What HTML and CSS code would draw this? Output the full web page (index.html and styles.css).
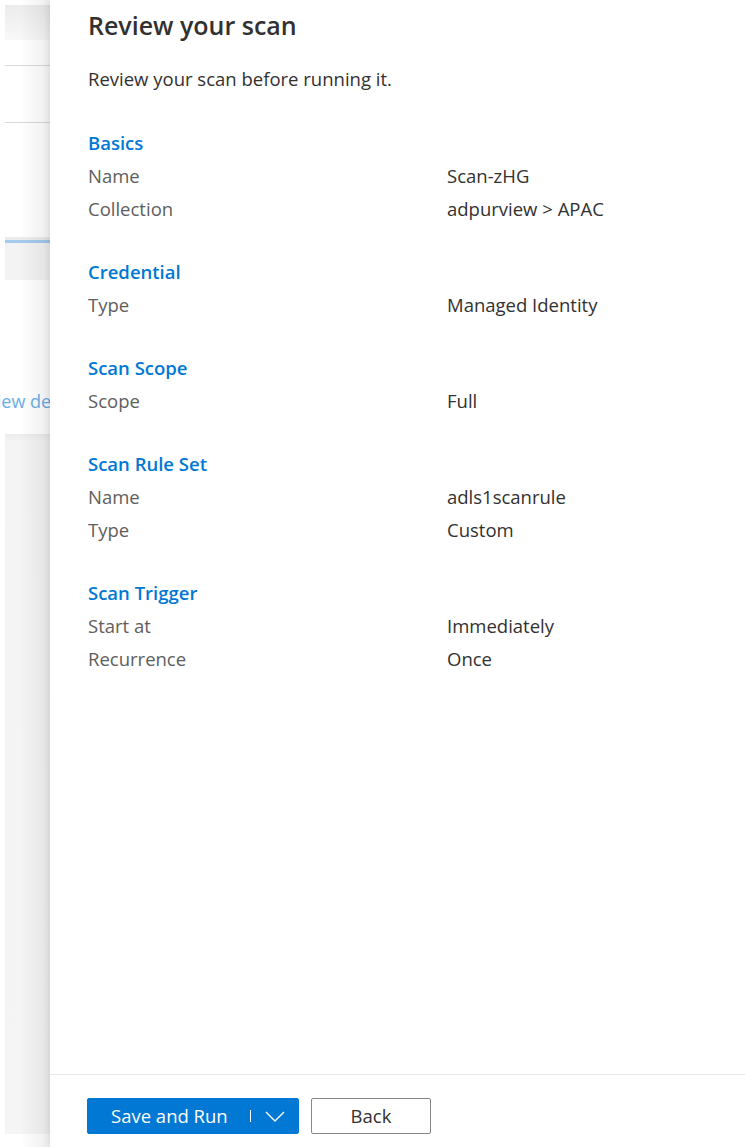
FILE: index.html
```html
<!DOCTYPE html>
<html lang="en">
<head>
<meta charset="utf-8">
<title>Review your scan</title>
<link rel="stylesheet" href="styles.css">
</head>
<body>
<div class="page">
  <aside class="backdrop">
    <div class="bd-top"></div>
    <div class="bd-row"></div>
    <div class="bd-row bd-row2"></div>
    <div class="bd-tab"><div class="bd-blue"></div></div>
    <div class="bd-link">View details</div>
    <div class="bd-card"></div>
  </aside>
  <main class="panel">
    <div class="content">
      <h1 class="title">Review your scan</h1>
      <p class="subtitle">Review your scan before running it.</p>

      <section class="section">
        <h2 class="sec-title">Basics</h2>
        <div class="row"><span class="label">Name</span><span class="value">Scan-zHG</span></div>
        <div class="row"><span class="label">Collection</span><span class="value">adpurview &gt; APAC</span></div>
      </section>

      <section class="section">
        <h2 class="sec-title">Credential</h2>
        <div class="row"><span class="label">Type</span><span class="value">Managed Identity</span></div>
      </section>

      <section class="section">
        <h2 class="sec-title">Scan Scope</h2>
        <div class="row"><span class="label">Scope</span><span class="value">Full</span></div>
      </section>

      <section class="section">
        <h2 class="sec-title">Scan Rule Set</h2>
        <div class="row"><span class="label">Name</span><span class="value">adls1scanrule</span></div>
        <div class="row"><span class="label">Type</span><span class="value">Custom</span></div>
      </section>

      <section class="section">
        <h2 class="sec-title">Scan Trigger</h2>
        <div class="row"><span class="label">Start at</span><span class="value">Immediately</span></div>
        <div class="row"><span class="label">Recurrence</span><span class="value">Once</span></div>
      </section>
    </div>
    <footer class="footer">
      <button class="btn btn-primary" type="button">
        <span class="btn-text">Save and Run</span>
        <span class="btn-sep"></span>
        <svg class="chev" width="20" height="11" viewBox="0 0 20 11" aria-hidden="true"><path d="M1 1 L10 10 L19 1" fill="none" stroke="#fff" stroke-width="1.4"/></svg>
      </button>
      <button class="btn btn-default" type="button">Back</button>
    </footer>
  </main>
</div>
</body>
</html>
```

FILE: styles.css
```css
* { box-sizing: border-box; }
html, body { margin: 0; padding: 0; }
body {
  font-family: "Open Sans", "Noto Sans", "Liberation Sans", sans-serif;
  background: #ffffff;
  color: #323130;
}
.page {
  display: flex;
  width: 745px;
  height: 1147px;
  overflow: hidden;
}

/* background page behind the panel */
.backdrop {
  width: 50px;
  flex: none;
  display: flex;
  flex-direction: column;
  padding: 5px 0 0 5px;
  overflow: hidden;
  background: #ffffff;
  position: relative;
}
.backdrop::after {
  content: "";
  position: absolute;
  top: 0; bottom: 0; right: 0;
  width: 30px;
  background: linear-gradient(to right, rgba(0,0,0,0), rgba(0,0,0,0.07));
  pointer-events: none;
}
.bd-top {
  height: 35px;
  background: linear-gradient(to bottom, #ececec, #f8f8f8);
}
.bd-row {
  height: 26px;
  border-bottom: 1px solid #d9d9d9;
}
.bd-row2 {
  height: 57px;
}
.bd-tab {
  margin-top: 114px;
  height: 43px;
  border-top: 3px solid #ececec;
  background: #f3f3f3;
}
.bd-blue {
  height: 3px;
  background: #a3cbee;
}
.bd-link {
  margin-top: 108px;
  margin-left: -19px;
  white-space: nowrap;
  font-size: 18px;
  line-height: 26px;
  color: #6aaee6;
}
.bd-card {
  margin-top: 20px;
  height: 700px;
  background: linear-gradient(to bottom, #ececec, #f4f4f4 8px, #f5f5f5);
}

/* panel */
.panel {
  flex: 1;
  display: flex;
  flex-direction: column;
  background: #ffffff;
  box-shadow: -2px 0 6px rgba(0,0,0,0.08);
  position: relative;
  z-index: 1;
}
.content {
  flex: 1;
  padding: 0 38px;
}
.title {
  margin: 9px 0 0;
  font-size: 25px;
  line-height: 32px;
  font-weight: 600;
  color: #323130;
}
.subtitle {
  margin: 26px 0 0;
  font-size: 18.5px;
  line-height: 24px;
  color: #323130;
}
.section {
  margin-top: 30px;
}
.section:first-of-type {
  margin-top: 35px;
}
.sec-title {
  margin: 0;
  font-size: 18.5px;
  line-height: 33px;
  font-weight: 600;
  color: #0078d4;
}
.row {
  display: grid;
  grid-template-columns: 359px 1fr;
  font-size: 18.5px;
  line-height: 33px;
}
.label { color: #605e5c; }
.value { color: #323130; }

/* footer */
.footer {
  flex: none;
  height: 73px;
  border-top: 1px solid #e6e6e6;
  display: flex;
  align-items: flex-start;
  gap: 12px;
  padding: 23px 0 0 37px;
}
.btn {
  height: 36px;
  border-radius: 2px;
  font-family: inherit;
  font-size: 18.5px;
  line-height: 24px;
  padding: 0;
  cursor: pointer;
}
.btn-primary {
  width: 212px;
  background: #0078d4;
  border: 1px solid #0078d4;
  color: #ffffff;
  display: flex;
  align-items: center;
  padding-left: 23px;
}
.btn-text { white-space: nowrap; }
.btn-sep {
  width: 1.5px;
  height: 12px;
  background: #ffffff;
  margin-left: 22px;
}
.chev {
  margin-left: 14px;
}
.btn-default {
  width: 120px;
  background: #ffffff;
  border: 1px solid #8a8886;
  color: #323130;
}
```
